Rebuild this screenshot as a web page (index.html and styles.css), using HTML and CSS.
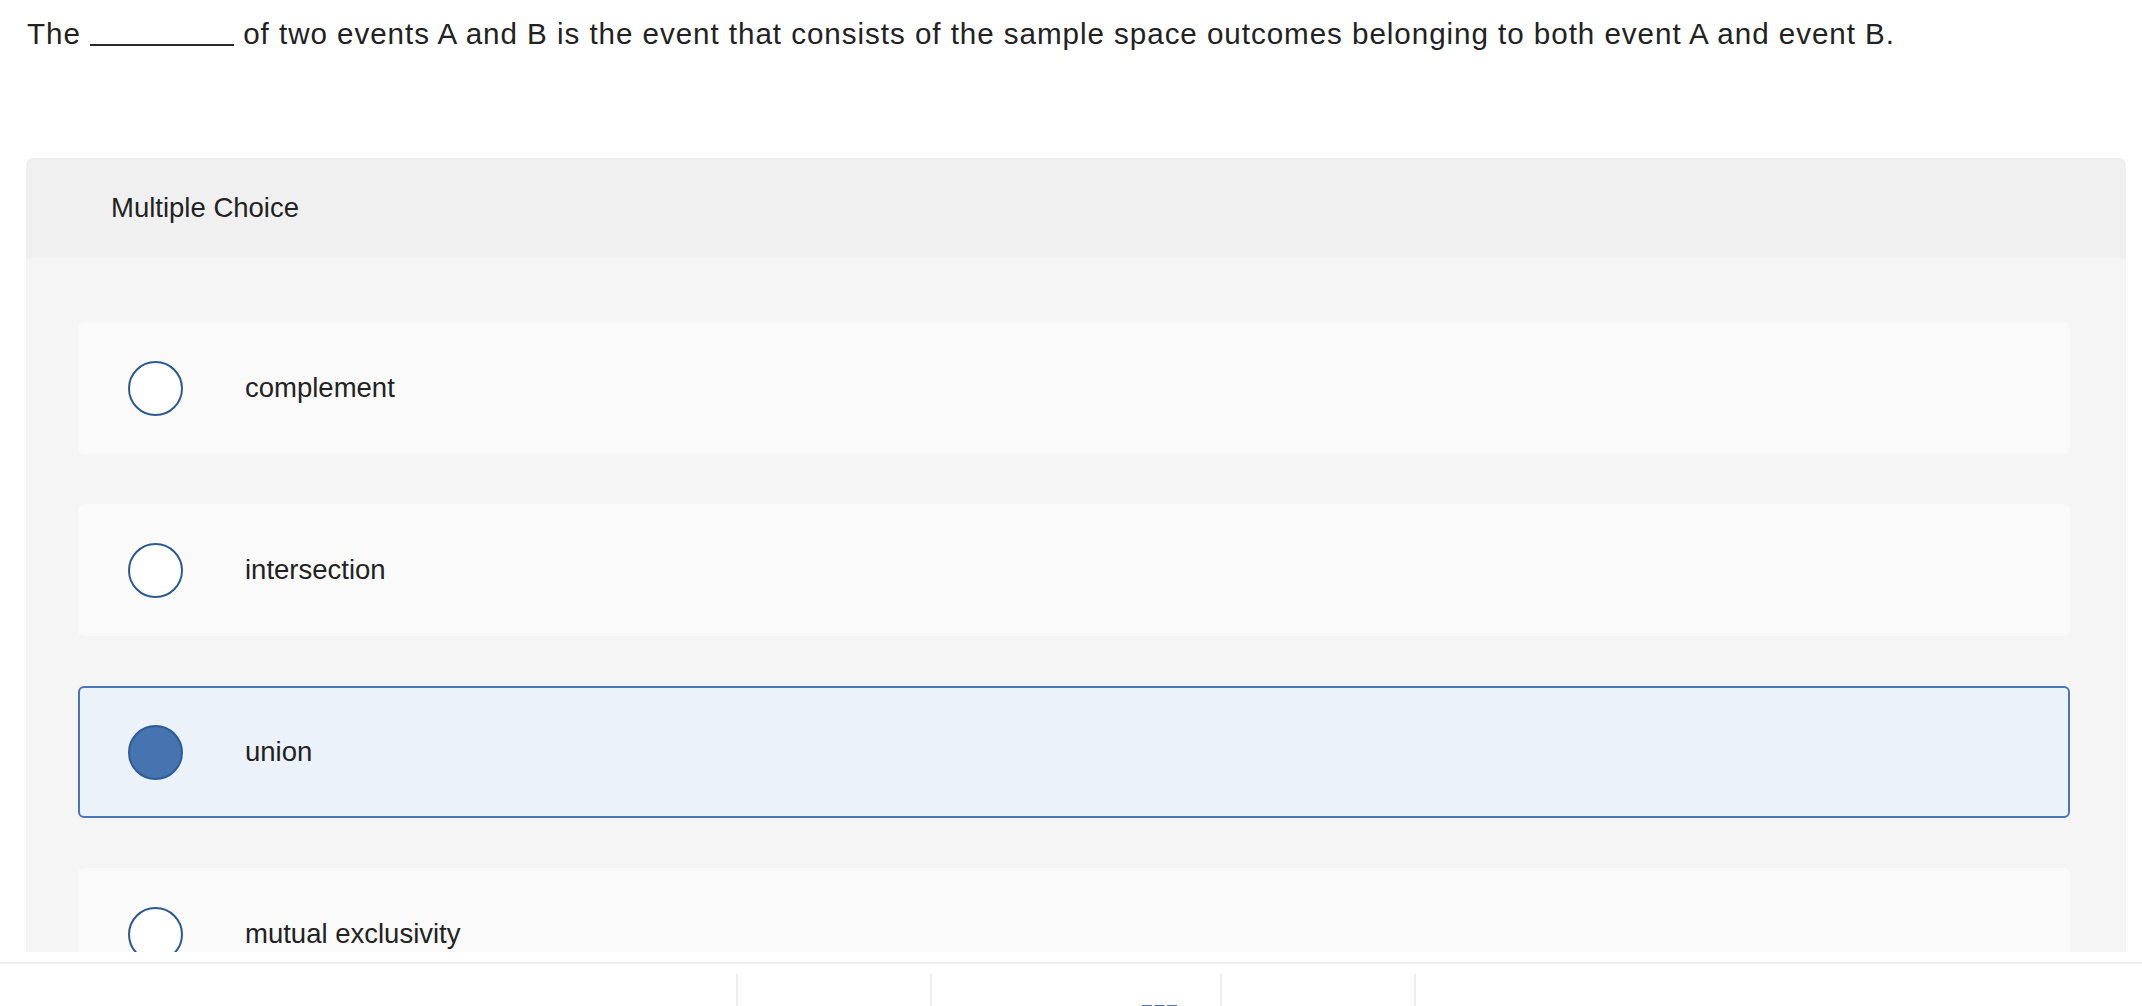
FILE: index.html
```html
<!DOCTYPE html>
<html lang="en">
<head>
<meta charset="utf-8">
<title>Multiple Choice</title>
<link rel="stylesheet" href="styles.css">
</head>
<body>
<div class="page">
  <p class="question">The <span class="blank"></span> of two events A and B is the event that consists of the sample space outcomes belonging to both event A and event B.</p>

  <section class="panel">
    <header class="panel-head">Multiple Choice</header>
    <div class="panel-body">
      <div class="choice">
        <span class="radio"></span>
        <span class="label">complement</span>
      </div>
      <div class="choice">
        <span class="radio"></span>
        <span class="label">intersection</span>
      </div>
      <div class="choice selected">
        <span class="radio"></span>
        <span class="label">union</span>
      </div>
      <div class="choice">
        <span class="radio"></span>
        <span class="label">mutual exclusivity</span>
      </div>
    </div>
  </section>

  <footer class="footer">
    <span class="divider"></span>
    <div class="slot small"></div>
    <span class="divider"></span>
    <div class="slot wide">
      <svg class="grid-icon" width="36" height="36" viewBox="0 0 36 36" aria-hidden="true">
        <rect x="0" y="0" width="10" height="10" fill="#4a76b4"/>
        <rect x="12.5" y="0" width="10" height="10" fill="#4a76b4"/>
        <rect x="25" y="0" width="10" height="10" fill="#4a76b4"/>
      </svg>
    </div>
    <span class="divider"></span>
    <div class="slot small"></div>
    <span class="divider"></span>
  </footer>
</div>
</body>
</html>
```

FILE: styles.css
```css
html, body {
  margin: 0;
  padding: 0;
  background: #ffffff;
  overflow: hidden;
}

.page {
  width: 2142px;
  height: 1006px;
  display: flex;
  flex-direction: column;
  font-family: "Liberation Sans", Arial, sans-serif;
  color: #222222;
}

.question {
  margin: 0;
  padding: 14px 0 0 27px;
  font-size: 29.6px;
  line-height: 40px;
  letter-spacing: 0.95px;
  white-space: nowrap;
}

.blank {
  display: inline-block;
  width: 144px;
  height: 20px;
  border-bottom: 2px solid #2a2a2a;
  margin-bottom: -2px;
  vertical-align: baseline;
}

.panel {
  margin: 104px 0 0 26px;
  width: 2100px;
  height: 794px;
  flex: none;
  overflow: hidden;
  border-radius: 7px 7px 0 0;
  background: #f5f5f5;
}

.panel-head {
  height: 100px;
  display: flex;
  align-items: center;
  padding-left: 85px;
  background: #f0f0f0;
  font-size: 27.5px;
}

.panel-body {
  padding: 64px 56px 0 52px;
  display: flex;
  flex-direction: column;
  gap: 50px;
}

.choice {
  flex: none;
  height: 132px;
  box-sizing: border-box;
  display: flex;
  align-items: center;
  padding-left: 50px;
  background: #fafafa;
  border-radius: 6px;
  font-size: 27.5px;
}

.choice .radio {
  flex: none;
  width: 55px;
  height: 55px;
  box-sizing: border-box;
  border: 2px solid #2d5a8e;
  border-radius: 50%;
  background: #ffffff;
  margin-right: 62px;
}

.choice.selected {
  background: #ebf2fa;
  border: 2px solid #4a77b4;
  padding-left: 48px;
}

.choice.selected .radio {
  background: #4674b1;
  border-color: #2e5b94;
}

.footer {
  margin-top: 10px;
  flex: 1;
  border-top: 2px solid #eeeeee;
  padding: 10px 0 0 10px;
  display: flex;
  justify-content: center;
  align-items: stretch;
}

.divider {
  flex: none;
  width: 2px;
  background: #eeeeee;
}

.slot {
  flex: none;
  position: relative;
}

.slot.small {
  width: 192px;
}

.slot.wide {
  width: 288px;
}

.grid-icon {
  position: absolute;
  left: 210px;
  top: 31px;
}
```
